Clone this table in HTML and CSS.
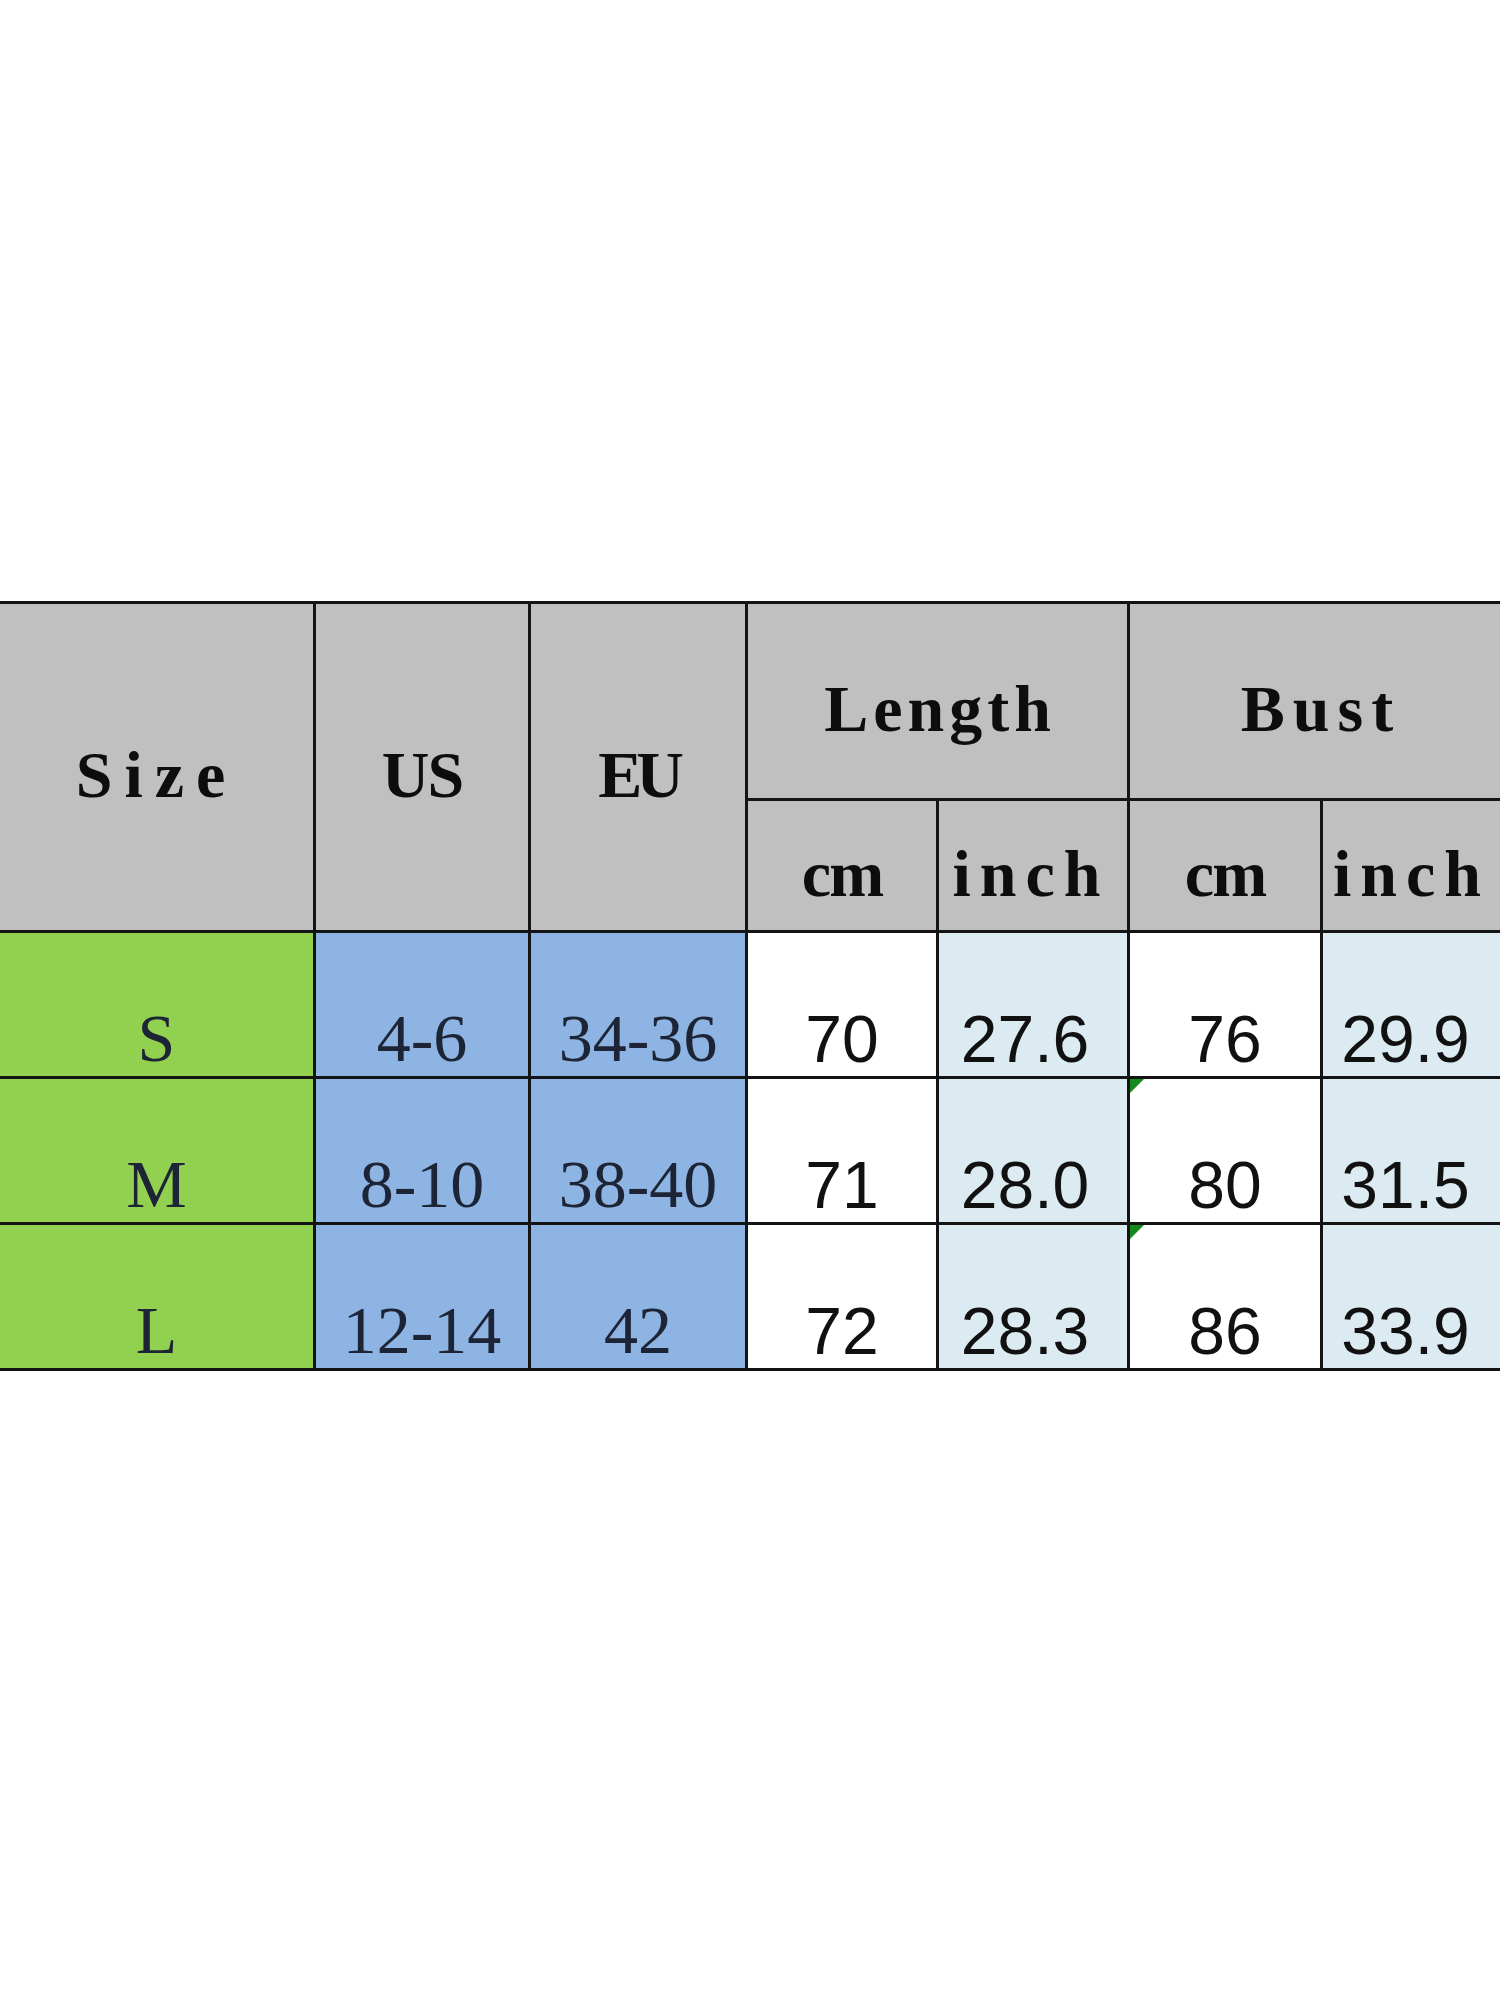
FILE: index.html
```html
<!DOCTYPE html>
<html lang="en">
<head>
<meta charset="utf-8">
<title>Size chart</title>
<link rel="stylesheet" href="styles.css">
</head>
<body>
<div class="sheet">
  <table class="chart">
    <colgroup>
      <col class="c-size">
      <col class="c-us">
      <col class="c-eu">
      <col class="c-m">
      <col class="c-m">
      <col class="c-m2">
      <col class="c-last">
    </colgroup>
    <thead>
      <tr class="h1">
        <th rowspan="2" class="hd w-size">Size</th>
        <th rowspan="2" class="hd w-us">US</th>
        <th rowspan="2" class="hd w-eu">EU</th>
        <th colspan="2" class="hd grp w-length">Length</th>
        <th colspan="2" class="hd grp w-bust">Bust</th>
      </tr>
      <tr class="h2">
        <th class="hd sub w-cm">cm</th>
        <th class="hd sub inch w-inch">inch</th>
        <th class="hd sub w-cm">cm</th>
        <th class="hd sub inch w-inch">inch</th>
      </tr>
    </thead>
    <tbody>
      <tr>
        <td class="size">S</td>
        <td class="conv">4-6</td>
        <td class="conv">34-36</td>
        <td class="num">70</td>
        <td class="num tint inch">27.6</td>
        <td class="num">76</td>
        <td class="num tint inch">29.9</td>
      </tr>
      <tr>
        <td class="size">M</td>
        <td class="conv">8-10</td>
        <td class="conv">38-40</td>
        <td class="num">71</td>
        <td class="num tint inch">28.0</td>
        <td class="num flag">80</td>
        <td class="num tint inch">31.5</td>
      </tr>
      <tr>
        <td class="size">L</td>
        <td class="conv">12-14</td>
        <td class="conv">42</td>
        <td class="num">72</td>
        <td class="num tint inch">28.3</td>
        <td class="num flag">86</td>
        <td class="num tint inch">33.9</td>
      </tr>
    </tbody>
  </table>
</div>
</body>
</html>
```

FILE: styles.css
```css
html, body {
  margin: 0;
  padding: 0;
  background: #ffffff;
}

.sheet {
  width: 1500px;
  height: 2000px;
  overflow: hidden;
  padding-top: 601px;
  box-sizing: border-box;
}

.chart {
  border-collapse: collapse;
  table-layout: fixed;
  width: 1507px;
  margin-left: -3px;
}

.c-size { width: 316px; }
.c-us { width: 215px; }
.c-eu { width: 217px; }
.c-m { width: 191px; }
.c-m2 { width: 193px; }
.c-last { width: 184px; }

.chart th,
.chart td {
  border: 3px solid #141414;
  padding: 0;
  text-align: center;
}

.chart th {
  background: #c0c0c0;
  color: #0d0d0d;
  font-family: "Liberation Serif", "Times New Roman", serif;
  font-weight: bold;
  font-size: 66px;
  line-height: 1;
  vertical-align: middle;
  padding-top: 16px;
}

.w-size { letter-spacing: 12px; padding-right: 12px; }
.w-us { letter-spacing: -2px; }
.w-eu { letter-spacing: -6px; }
.w-length { letter-spacing: 5px; text-indent: 5px; }
.w-bust { letter-spacing: 8px; text-indent: 8px; }
.w-cm { letter-spacing: -2px; }
.w-inch { letter-spacing: 9px; }

.h1 th.grp { height: 178px; }
.h2 th { height: 113px; }

.chart th.inch {
  padding-right: 4px;
}

.chart td.inch {
  padding-right: 16px;
}

.chart td {
  height: 139px;
  vertical-align: bottom;
  padding-bottom: 4px;
  line-height: 1;
}

.chart td.size {
  background: #92d050;
  color: #1c2436;
  font-family: "Liberation Serif", "Times New Roman", serif;
  font-size: 68px;
}

.chart td.conv {
  background: #8db4e2;
  color: #1c2436;
  font-family: "Liberation Serif", "Times New Roman", serif;
  font-size: 68px;
}

.chart td.num {
  background: #ffffff;
  color: #111111;
  font-family: "Liberation Sans", Arial, sans-serif;
  font-size: 66px;
}

.chart td.tint {
  background: #dcebf2;
}

.chart td.flag {
  position: relative;
}

.chart td.flag::before {
  content: "";
  position: absolute;
  top: 0;
  left: 0;
  width: 0;
  height: 0;
  border-top: 14px solid #138a1b;
  border-right: 14px solid transparent;
}
```
